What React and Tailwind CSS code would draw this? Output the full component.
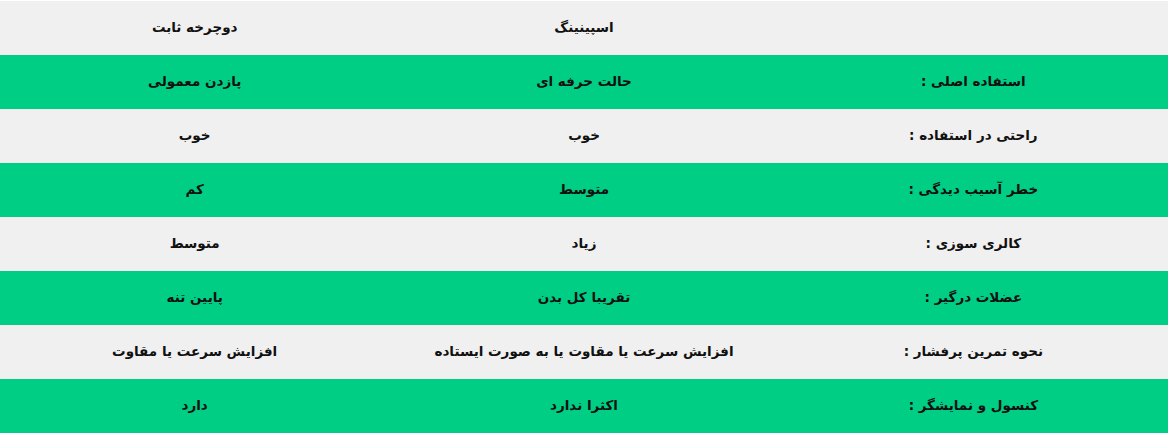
const rows = [
  ['', 'اسپینینگ', 'دوچرخه ثابت'],
  ['استفاده اصلی :', 'حالت حرفه ای', 'پازدن معمولی'],
  ['راحتی در استفاده :', 'خوب', 'خوب'],
  ['خطر آسیب دیدگی :', 'متوسط', 'کم'],
  ['کالری سوزی :', 'زیاد', 'متوسط'],
  ['عضلات درگیر :', 'تقریبا کل بدن', 'پایین تنه'],
  ['نحوه تمرین پرفشار :', 'افزایش سرعت یا مقاوت یا به صورت ایستاده', 'افزایش سرعت یا مقاوت'],
  ['کنسول و نمایشگر :', 'اکثرا ندارد', 'دارد'],
];

export default function App() {
  return (
    <div className="w-[1170px] h-[433px] bg-white pt-px">
      <div dir="rtl" className="w-[1168px] flex flex-col font-['DejaVu_Sans',sans-serif] text-[13.5px] font-bold text-[#111]">
        {rows.map((r, i) => (
          <div key={i} className={`grid grid-cols-3 h-[54px] items-center ${i % 2 ? 'bg-[#00ce84]' : 'bg-[#f0f0f0]'}`}>
            {r.map((c, j) => (
              <div key={j} className="text-center -mt-px">{c}</div>
            ))}
          </div>
        ))}
      </div>
    </div>
  );
}
